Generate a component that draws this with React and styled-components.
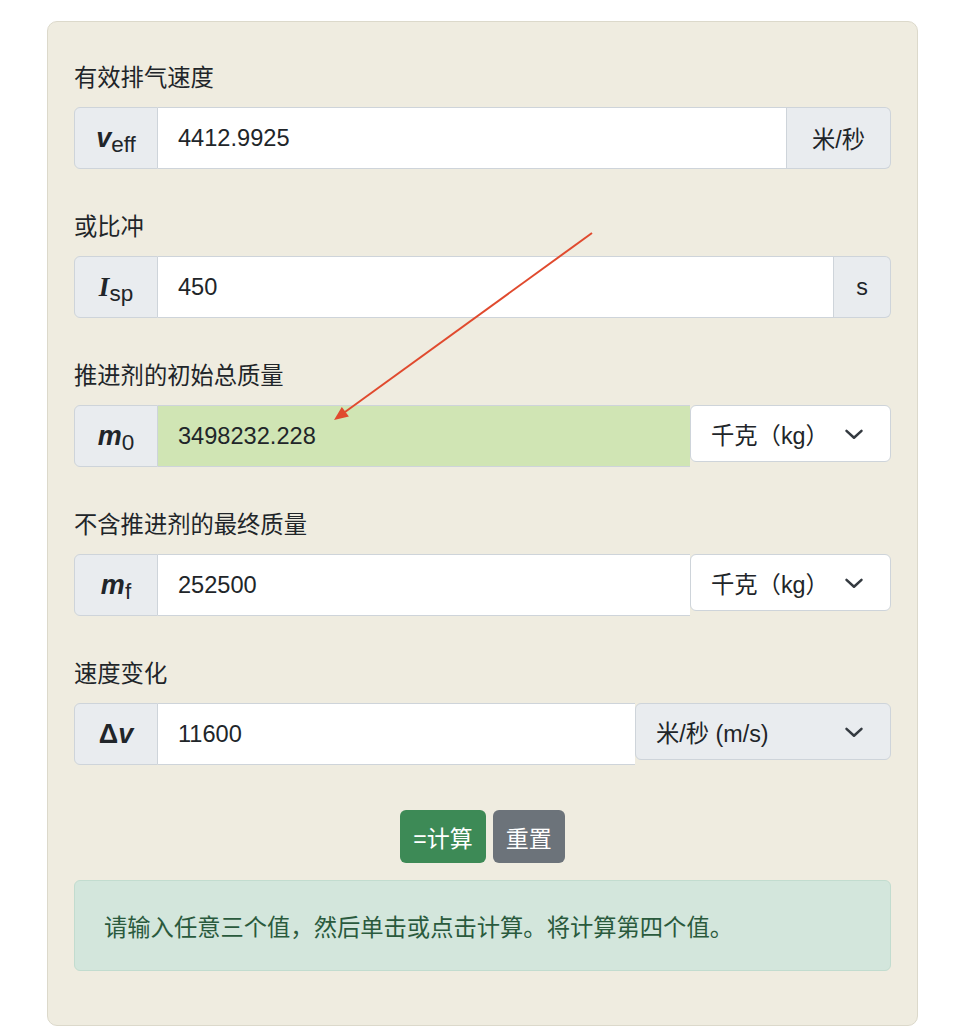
import React from "react";
import styled, { createGlobalStyle } from "styled-components";

const Global = createGlobalStyle`
  html, body { margin: 0; padding: 0; background: #ffffff; }
  body {
    font-family: "Liberation Sans", "Noto Sans CJK SC", sans-serif;
    color: #212529;
  }
  * { box-sizing: border-box; }
`;

const Card = styled.div`
  position: relative;
  margin: 21px 0 0 47px;
  width: 871px;
  padding: 39px 26px 54px;
  background: #efece0;
  border: 1px solid #dcd9cb;
  border-radius: 10px;
  display: flex;
  flex-direction: column;
`;

const Field = styled.div`
  margin-bottom: 41px;
`;

const Label = styled.div`
  font-size: 23.3px;
  line-height: 35px;
  margin-bottom: 11px;
  color: #212529;
`;

const Group = styled.div`
  display: flex;
  height: 62px;
  align-items: stretch;
`;

const LeftAddon = styled.div`
  width: 84px;
  flex: none;
  display: flex;
  align-items: center;
  justify-content: center;
  background: #e9ecef;
  border: 1px solid #ced4da;
  border-radius: 6px 0 0 6px;
  color: #212529;
  white-space: nowrap;
`;

const Var = styled.span`
  font-family: ${(p) => (p.$serif ? '"Liberation Serif", serif' : '"Liberation Sans", sans-serif')};
  font-weight: bold;
  font-style: ${(p) => (p.$upright ? "normal" : "italic")};
  font-size: 27px;
  line-height: 1;
`;

const Sub = styled.span`
  font-size: 22.5px;
  line-height: 1;
  position: relative;
  top: 7px;
`;

const Input = styled.div`
  flex: 1;
  display: flex;
  align-items: center;
  padding: 0 20px;
  font-size: 23.6px;
  background: ${(p) => (p.$highlight ? "#d0e5b4" : "#ffffff")};
  border: 1px solid #ced4da;
  border-left: none;
  border-right: ${(p) => (p.$closed ? "none" : "1px solid #ced4da")};
  color: #212529;
`;

const RightAddon = styled.div`
  flex: none;
  display: flex;
  align-items: center;
  justify-content: center;
  padding: 0 ${(p) => p.$pad || 24}px;
  background: #e9ecef;
  border: 1px solid #ced4da;
  border-left: none;
  border-radius: 0 6px 6px 0;
  font-size: 23.3px;
  color: #212529;
`;

const Select = styled.div`
  flex: none;
  align-self: flex-start;
  width: ${(p) => p.$width}px;
  height: 57px;
  display: flex;
  align-items: center;
  justify-content: space-between;
  padding: 0 26px 0 20px;
  background: ${(p) => (p.$gray ? "#e9ecef" : "#ffffff")};
  border: 1px solid #ced4da;
  border-radius: 6px;
  font-size: 23.3px;
  color: #212529;
`;

const ButtonRow = styled.div`
  margin-top: 4px;
  display: flex;
  justify-content: center;
  gap: 7px;
`;

const Button = styled.button`
  height: 53px;
  padding: 0 13px;
  border: none;
  border-radius: 6px;
  font-family: "Liberation Sans", "Noto Sans CJK SC", sans-serif;
  font-size: 23px;
  color: #ffffff;
  background: ${(p) => (p.$variant === "gray" ? "#6c737a" : "#3d8a56")};
`;

const Alert = styled.div`
  margin-top: 17px;
  height: 91px;
  display: flex;
  align-items: center;
  padding: 0 29px;
  background: #d3e6dc;
  border: 1px solid #c2dccf;
  border-radius: 6px;
  font-size: 23.3px;
  color: #2a5a3d;
`;

const Overlay = styled.svg`
  position: absolute;
  left: 0;
  top: 0;
  width: 100%;
  height: 100%;
  pointer-events: none;
  overflow: visible;
`;

const Chevron = () => (
  <svg width="20" height="20" viewBox="0 0 16 16" fill="none">
    <path d="M2 5.5l6 5.5 6-5.5" stroke="#343a40" strokeWidth="2" strokeLinecap="round" strokeLinejoin="round" />
  </svg>
);

export default function App() {
  return (
    <>
      <Global />
      <Card>
        <Field>
          <Label>有效排气速度</Label>
          <Group>
            <LeftAddon>
              <Var>v</Var>
              <Sub>eff</Sub>
            </LeftAddon>
            <Input>4412.9925</Input>
            <RightAddon $pad={25}>米/秒</RightAddon>
          </Group>
        </Field>

        <Field>
          <Label>或比冲</Label>
          <Group>
            <LeftAddon>
              <Var $serif>I</Var>
              <Sub>sp</Sub>
            </LeftAddon>
            <Input>450</Input>
            <RightAddon $pad={22}>s</RightAddon>
          </Group>
        </Field>

        <Field>
          <Label>推进剂的初始总质量</Label>
          <Group>
            <LeftAddon>
              <Var>m</Var>
              <Sub>0</Sub>
            </LeftAddon>
            <Input $highlight $closed>3498232.228</Input>
            <Select $width={201}>
              <span>千克（kg）</span>
              <Chevron />
            </Select>
          </Group>
        </Field>

        <Field>
          <Label>不含推进剂的最终质量</Label>
          <Group>
            <LeftAddon>
              <Var>m</Var>
              <Sub>f</Sub>
            </LeftAddon>
            <Input $closed>252500</Input>
            <Select $width={201}>
              <span>千克（kg）</span>
              <Chevron />
            </Select>
          </Group>
        </Field>

        <Field>
          <Label>速度变化</Label>
          <Group>
            <LeftAddon>
              <Var $upright>Δ</Var>
              <Var>v</Var>
            </LeftAddon>
            <Input $closed>11600</Input>
            <Select $width={256} $gray>
              <span>米/秒 (m/s)</span>
              <Chevron />
            </Select>
          </Group>
        </Field>

        <ButtonRow>
          <Button>=计算</Button>
          <Button $variant="gray">重置</Button>
        </ButtonRow>

        <Alert>请输入任意三个值，然后单击或点击计算。将计算第四个值。</Alert>

        <Overlay>
          <line x1="544" y1="211" x2="297" y2="390" stroke="#e04a2e" strokeWidth="2" />
          <polygon points="286,398 300.9,394.6 293.8,384.9" fill="#e04a2e" />
        </Overlay>
      </Card>
    </>
  );
}
